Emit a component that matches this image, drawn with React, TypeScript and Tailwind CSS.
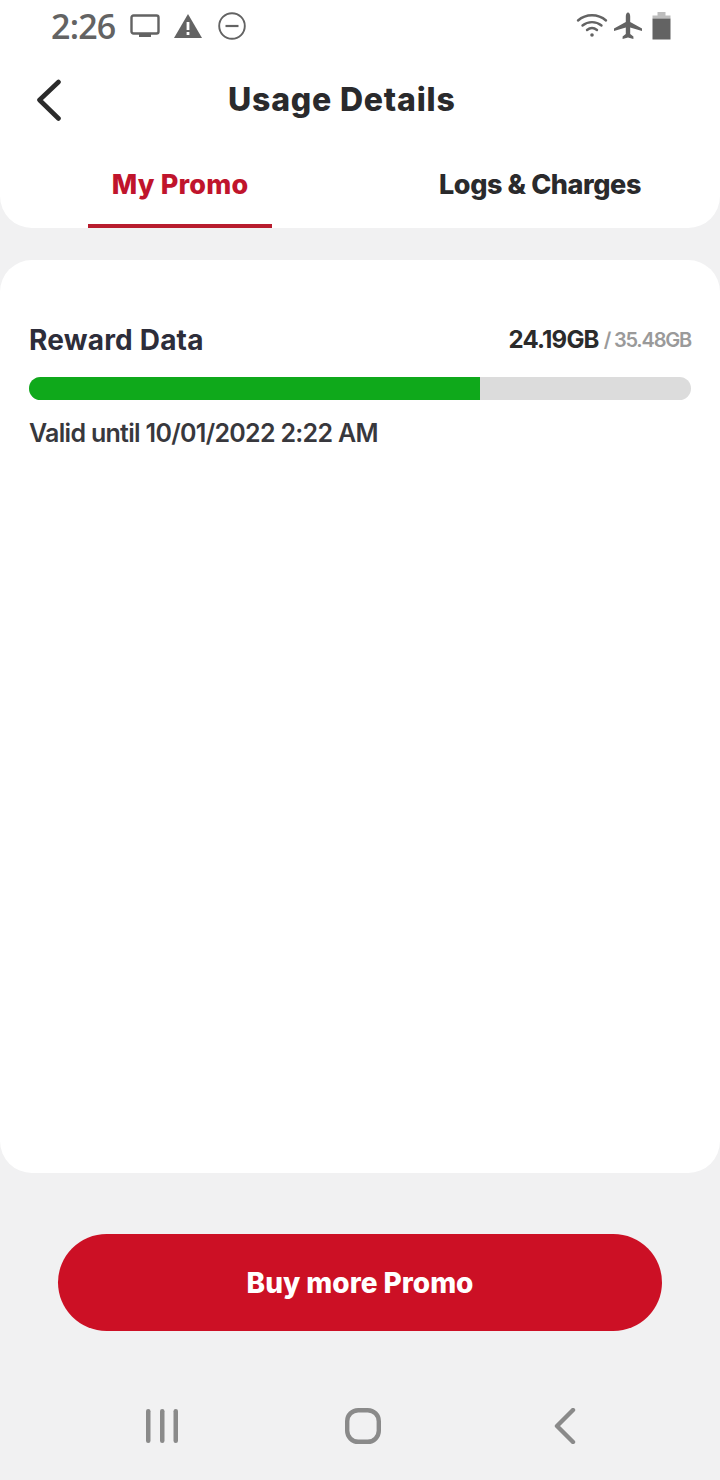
/**
 * Usage Details screen with promo data balance.
 */

import { useState } from 'react';

function StatusBar() {
  return (
    <div className="flex h-[52px] items-center justify-between pl-[51px] pr-[49px] text-[#636363]">
      <div className="flex items-center">
        <span className="font-['Open_Sans',sans-serif] text-[34px] font-semibold leading-none tracking-[-0.8px]">2:26</span>
        <svg className="ml-[15px]" width="30" height="26" viewBox="0 0 30 26" fill="none">
          <rect x="1.5" y="2.5" width="27" height="18" rx="2" stroke="currentColor" strokeWidth="2.4" />
          <rect x="9" y="21" width="12" height="3" fill="currentColor" />
        </svg>
        <svg className="ml-[13px]" width="30" height="26" viewBox="0 0 30 26">
          <path d="M15 1 L29 25 H1 Z" fill="currentColor" />
          <rect x="13.6" y="9" width="2.8" height="8" fill="#fff" />
          <rect x="13.6" y="19" width="2.8" height="3" fill="#fff" />
        </svg>
        <svg className="ml-[14px]" width="30" height="30" viewBox="0 0 30 30" fill="none">
          <circle cx="15" cy="15" r="12.8" stroke="currentColor" strokeWidth="1.9" />
          <path d="M8.5 15 H21.5" stroke="currentColor" strokeWidth="2.2" />
        </svg>
      </div>
      <div className="flex items-center">
        <svg width="32" height="26" viewBox="0 0 32 26" fill="none" stroke="currentColor" strokeWidth="2.4" strokeLinecap="round">
          <path d="M2 7.5 C10 0.5 22 0.5 30 7.5" />
          <path d="M6.5 12.5 C12 8 20 8 25.5 12.5" />
          <path d="M11 17 C14 14.6 18 14.6 21 17" />
          <circle cx="16" cy="22" r="1.8" fill="currentColor" stroke="none" />
        </svg>
        <svg className="ml-[5px]" width="30" height="28" viewBox="0 0 30 28">
          <path
            d="M15 0.5 C16.4 0.5 17.2 2.5 17.2 4.5 V10 L29 16.4 V19 L17.2 15.6 V22 L20.4 24.4 V27 L15 25.6 L9.6 27 V24.4 L12.8 22 V15.6 L1 19 V16.4 L12.8 10 V4.5 C12.8 2.5 13.6 0.5 15 0.5 Z"
            fill="currentColor"
          />
        </svg>
        <svg className="ml-[9px]" width="19" height="28" viewBox="0 0 19 28">
          <rect x="5.5" y="0" width="8" height="4" fill="#bdbdbd" />
          <rect x="0.5" y="3.5" width="18" height="3" fill="#bdbdbd" />
          <rect x="0.5" y="6.5" width="18" height="21" fill="currentColor" />
        </svg>
      </div>
    </div>
  );
}

function Header() {
  const [activeTab, setActiveTab] = useState('promo');

  const tabs = [
    { key: 'promo', label: 'My Promo' },
    { key: 'logs', label: 'Logs & Charges' },
  ];

  return (
    <div className="h-[228px] rounded-b-[32px] bg-white">
      <StatusBar />

      {/* Title row */}
      <div className="flex h-[92px] items-center pl-[36px] pt-[4px]">
        <svg width="26" height="42" viewBox="0 0 26 42" fill="none">
          <path d="M22.5 3 L3.5 21 L22.5 39.5" stroke="#2b2b2b" strokeWidth="4.6" strokeLinecap="round" strokeLinejoin="round" />
        </svg>
        <h1 className="ml-[166px] font-['Inter',sans-serif] text-[32px] font-extrabold leading-none tracking-[0.8px] text-[#2a2a2c]">
          Usage Details
        </h1>
      </div>

      {/* Tabs */}
      <div className="grid grid-cols-2">
        {tabs.map((tab) => (
          <button
            key={tab.key}
            onClick={() => setActiveTab(tab.key)}
            className="flex h-[84px] flex-col items-center"
          >
            <span
              className={`flex h-[80px] items-center pt-[2px] font-['Inter',sans-serif] text-[27px] font-extrabold ${
                activeTab === tab.key ? 'tracking-[0.2px] text-[#c0142c]' : 'tracking-[-0.4px] text-[#2a2a2c]'
              }`}
            >
              {tab.label}
            </span>
            <span className={`h-[4px] w-[184px] ${activeTab === tab.key ? 'bg-[#b81c2e]' : ''}`} />
          </button>
        ))}
      </div>
    </div>
  );
}

function RewardCard() {
  const used = 24.19;
  const total = 35.48;

  return (
    <div className="mt-[32px] h-[913px] rounded-[32px] bg-white px-[29px] pt-[62px]">
      <div className="flex h-[36px] items-center justify-between">
        <span className="font-['Inter',sans-serif] text-[28px] font-bold tracking-[0.2px] text-[#2d2d3a]">Reward Data</span>
        <span className="flex items-center font-['Inter',sans-serif]">
          <span className="text-[24px] font-bold tracking-[-0.8px] text-[#2b2b2b]">24.19GB</span>
          <span className="ml-[5px] text-[20px] font-semibold tracking-[-1.2px] text-[#9a9a9a]">/ 35.48GB</span>
        </span>
      </div>

      {/* Usage bar */}
      <div className="mt-[19px] h-[23px] overflow-hidden rounded-full bg-[#dcdcdc]">
        <div className="h-full bg-[#0fa91b]" style={{ width: `${(used / total) * 100 - 0.1}%` }} />
      </div>

      <p className="mt-[16px] font-['Inter',sans-serif] text-[25px] font-semibold leading-[35px] tracking-[-0.7px] text-[#38383d]">
        Valid until 10/01/2022 2:22 AM
      </p>
    </div>
  );
}

function NavBar() {
  return (
    <div className="mt-[77px] flex items-center pl-[145px] pr-[144px] text-[#8a8a8a]">
      <svg width="34" height="36" viewBox="0 0 34 36" fill="currentColor">
        <rect x="1" y="1" width="4.5" height="34" rx="2.2" />
        <rect x="15" y="1" width="4.5" height="34" rx="2.2" />
        <rect x="28.5" y="1" width="4.5" height="34" rx="2.2" />
      </svg>
      <svg className="ml-[166px]" width="36" height="36" viewBox="0 0 36 36" fill="none">
        <rect x="2.2" y="2.2" width="31.6" height="31.6" rx="11" stroke="currentColor" strokeWidth="4.4" />
      </svg>
      <svg className="ml-auto" width="22" height="36" viewBox="0 0 22 36" fill="none">
        <path d="M19 2 L3 18 L19 34" stroke="currentColor" strokeWidth="4.4" strokeLinecap="round" strokeLinejoin="round" />
      </svg>
    </div>
  );
}

export default function App() {
  return (
    <div className="h-[1480px] w-[720px] overflow-hidden bg-[#f1f1f2]">
      <Header />
      <RewardCard />

      <div className="mt-[61px] px-[58px]">
        <button className="flex h-[97px] w-full items-center justify-center rounded-full bg-[#cc1025] font-['Inter',sans-serif] text-[28px] font-extrabold text-white">
          Buy more Promo
        </button>
      </div>

      <NavBar />
    </div>
  );
}
